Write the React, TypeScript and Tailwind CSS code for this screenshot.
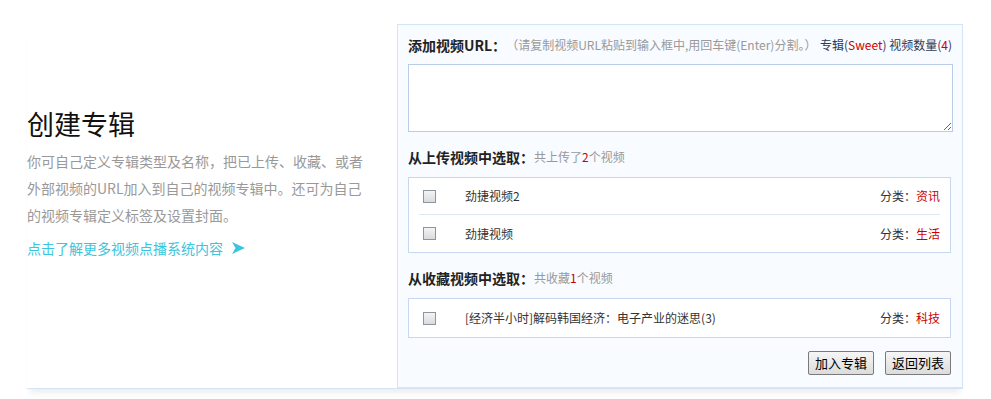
const font = { fontFamily: '"Noto Sans CJK SC", "Noto Sans", sans-serif' }

function Checkbox() {
  return (
    <div className="w-[13px] h-[13px] shrink-0 border border-[#8e959d] bg-gradient-to-b from-[#f4f4f4] to-[#d9dbde]" />
  )
}

function VideoRow(props: { title: string; kind: string; h: string }) {
  return (
    <div className={"flex items-center pl-[14px] pr-[10px] " + props.h}>
      <Checkbox />
      <span className="ml-[29px] text-[12px] text-[#333]">{props.title}</span>
      <span className="ml-auto text-[12px] text-[#333]">
        分类：<span className="text-[#cc0000]">{props.kind}</span>
      </span>
    </div>
  )
}

function SectionTitle(props: { title: string; children: React.ReactNode }) {
  return (
    <div className="flex items-center h-[20px] whitespace-nowrap">
      <span className="text-[14px] font-bold text-[#222]">{props.title}</span>
      <span className="text-[12px] text-[#999]">{props.children}</span>
    </div>
  )
}

export default function App() {
  return (
    <div className="w-[991px] h-[399px] bg-white pt-[24px] pl-[27px] overflow-hidden" style={font}>
      <div className="w-[936px] flex border-b border-[#d3e3f8] shadow-[0_7px_6px_-3px_rgba(0,0,0,0.07)]">
        <div className="w-[370px] pt-[80px]">
          <h1 className="text-[27px] leading-[40px] text-[#111] font-normal">创建专辑</h1>
          <p className="mt-[4px] text-[14px] leading-[27px] text-[#999] whitespace-nowrap">
            你可自己定义专辑类型及名称，把已上传、收藏、或者<br />
            外部视频的URL加入到自己的视频专辑中。还可为自己<br />
            的视频专辑定义标签及设置封面。
          </p>
          <a href="#" className="mt-[9px] flex items-center gap-[9px] text-[14px] leading-[20px] text-[#3cc5de]">
            点击了解更多视频点播系统内容
            <svg width="13" height="12" viewBox="0 0 13 12">
              <path d="M0 0 L13 6 L0 12 L3.5 6 Z" fill="#3cc5de" />
            </svg>
          </a>
        </div>

        <div className="w-[566px] h-[364px] border border-[#d6e4f7] bg-[#f8fbff] pl-[10px] pr-[10px] pt-[10px]">
          <div className="flex items-center h-[20px] whitespace-nowrap">
            <span className="text-[14px] font-bold text-[#222]">添加视频URL：</span>
            <span className="text-[12px] text-[#999]">（请复制视频URL粘贴到输入框中,用回车键(Enter)分割。）</span>
            <span className="ml-auto text-[12px] text-[#2c3a55]">
              专辑(<span className="text-[#cc0000]">Sweet</span>) 视频数量(<span className="text-[#cc0000]">4</span>)
            </span>
          </div>
          <textarea className="mt-[9px] block w-[545px] h-[68px] border border-[#b9cce8] bg-white outline-none" />

          <div className="mt-[15px]">
            <SectionTitle title="从上传视频中选取：">
              共上传了<span className="text-[#cc0000]">2</span>个视频
            </SectionTitle>
          </div>
          <div className="mt-[10px] w-[543px] border border-[#c6d7ef] bg-white">
            <VideoRow title="劲捷视频2" kind="资讯" h="h-[36px]" />
            <div className="mx-[10px] border-t border-[#dde8f6]" />
            <VideoRow title="劲捷视频" kind="生活" h="h-[37px]" />
          </div>

          <div className="mt-[15px]">
            <SectionTitle title="从收藏视频中选取：">
              共收藏<span className="text-[#cc0000]">1</span>个视频
            </SectionTitle>
          </div>
          <div className="mt-[10px] w-[543px] border border-[#c6d7ef] bg-white">
            <VideoRow title="[经济半小时]解码韩国经济：电子产业的迷思(3)" kind="科技" h="h-[38px]" />
          </div>

          <div className="mt-[13px] w-[543px] flex justify-end gap-[11px]">
            <button className="w-[66px] h-[24px] text-[13px] text-black border border-[#7a7a7a] rounded-[2px] bg-gradient-to-b from-[#f6f6f6] to-[#dcdcdc]">加入专辑</button>
            <button className="w-[66px] h-[24px] text-[13px] text-black border border-[#7a7a7a] rounded-[2px] bg-gradient-to-b from-[#f6f6f6] to-[#dcdcdc]">返回列表</button>
          </div>
        </div>
      </div>
    </div>
  )
}
